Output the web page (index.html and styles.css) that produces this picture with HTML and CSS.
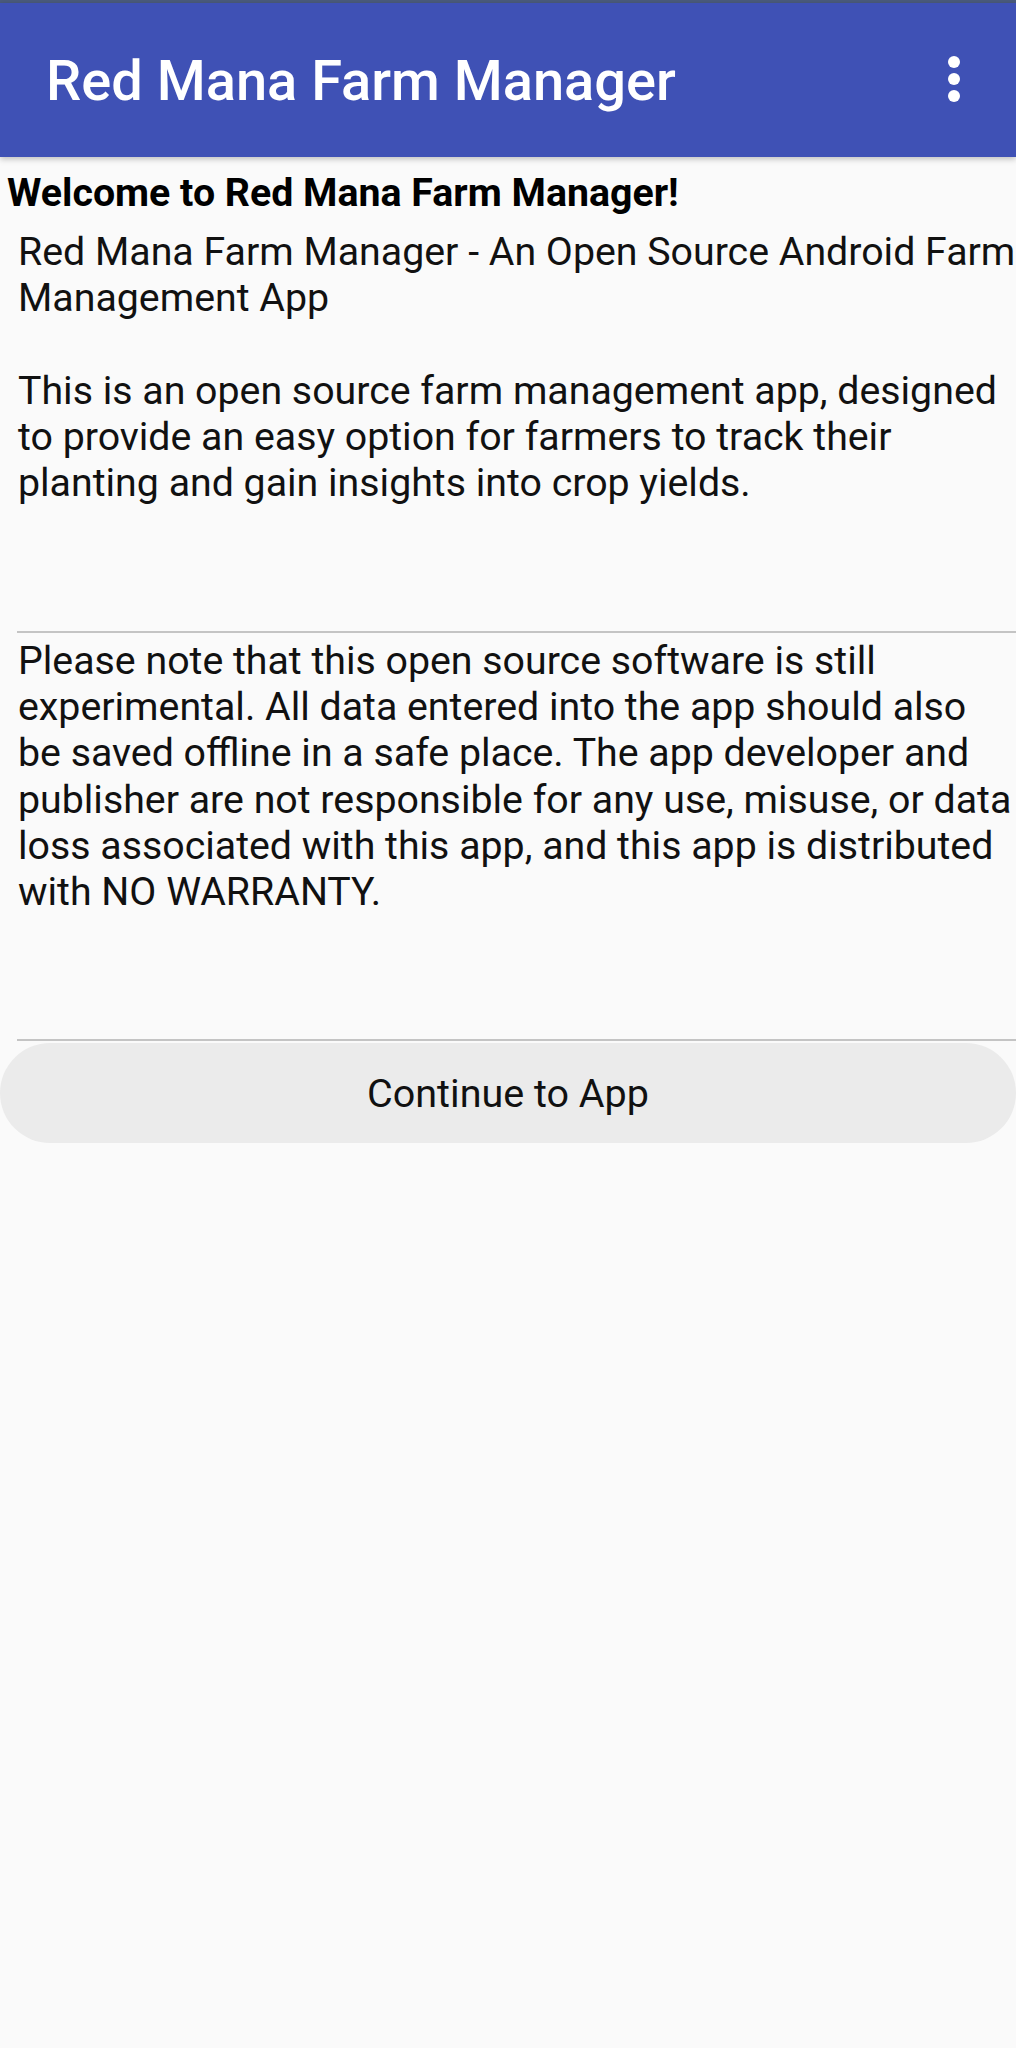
FILE: index.html
```html
<!DOCTYPE html>
<html>
<head>
<meta charset="utf-8">
<link rel="stylesheet" href="styles.css">
</head>
<body>
<div class="statusbar"></div>
<header class="appbar">
  <h1 class="appbar-title">Red Mana Farm Manager</h1>
  <div class="overflow" aria-label="More options">
    <span class="dot"></span><span class="dot"></span><span class="dot"></span>
  </div>
</header>
<main class="content">
  <h2 class="welcome">Welcome to Red Mana Farm Manager!</h2>
  <p class="body-text intro">Red Mana Farm Manager - An Open Source Android Farm Management App<br><br>This is an open source farm management app, designed to provide an easy option for farmers to track their planting and gain insights into crop yields.</p>
  <hr class="divider">
  <p class="body-text note">Please note that this open source software is still experimental. All data entered into the app should also be saved offline in a safe place. The app developer and publisher are not responsible for any use, misuse, or data loss associated with this app, and this app is distributed with NO WARRANTY.</p>
  <hr class="divider">
  <button class="continue">Continue to App</button>
</main>
</body>
</html>
```
FILE: styles.css
```css
html, body {
  margin: 0;
  padding: 0;
  background: #fafafa;
  font-family: Roboto, "Noto Sans", sans-serif;
  overflow-x: hidden;
}
.statusbar {
  height: 3px;
  background: #4b5b7c;
}
.appbar {
  height: 154px;
  background: #3f51b5;
  display: flex;
  align-items: center;
  justify-content: space-between;
  box-shadow: 0 2px 6px rgba(0,0,0,0.25);
  position: relative;
  z-index: 1;
}
.appbar-title {
  margin: 2px 0 0 46px;
  color: #fff;
  font-size: 56px;
  font-weight: 500;
  line-height: 1;
}
.overflow {
  display: flex;
  flex-direction: column;
  gap: 5px;
  margin-right: 56px;
  margin-top: -2px;
}
.dot {
  width: 12px;
  height: 12px;
  border-radius: 50%;
  background: #fff;
}
.content {
  display: flex;
  flex-direction: column;
}
.welcome {
  margin: 14px 0 0 7px;
  font-size: 39.3px;
  font-weight: 700;
  color: #000;
  line-height: 44px;
}
.body-text {
  margin: 0 0 0 18px;
  font-size: 39.3px;
  line-height: 46.2px;
  color: #111;
  width: 1000px;
}
.intro {
  margin-top: 14px;
  min-height: 402px;
}
.note {
  margin-top: 5px;
  min-height: 401px;
}
.divider {
  margin: 0 0 0 17px;
  border: none;
  height: 2px;
  background: #c4c4c4;
}
.continue {
  margin-top: 2px;
  height: 100px;
  width: 1016px;
  border: none;
  border-radius: 50px;
  background: #ebebeb;
  font-family: Roboto, "Noto Sans", sans-serif;
  font-size: 39.5px;
  color: #111;
}
```
